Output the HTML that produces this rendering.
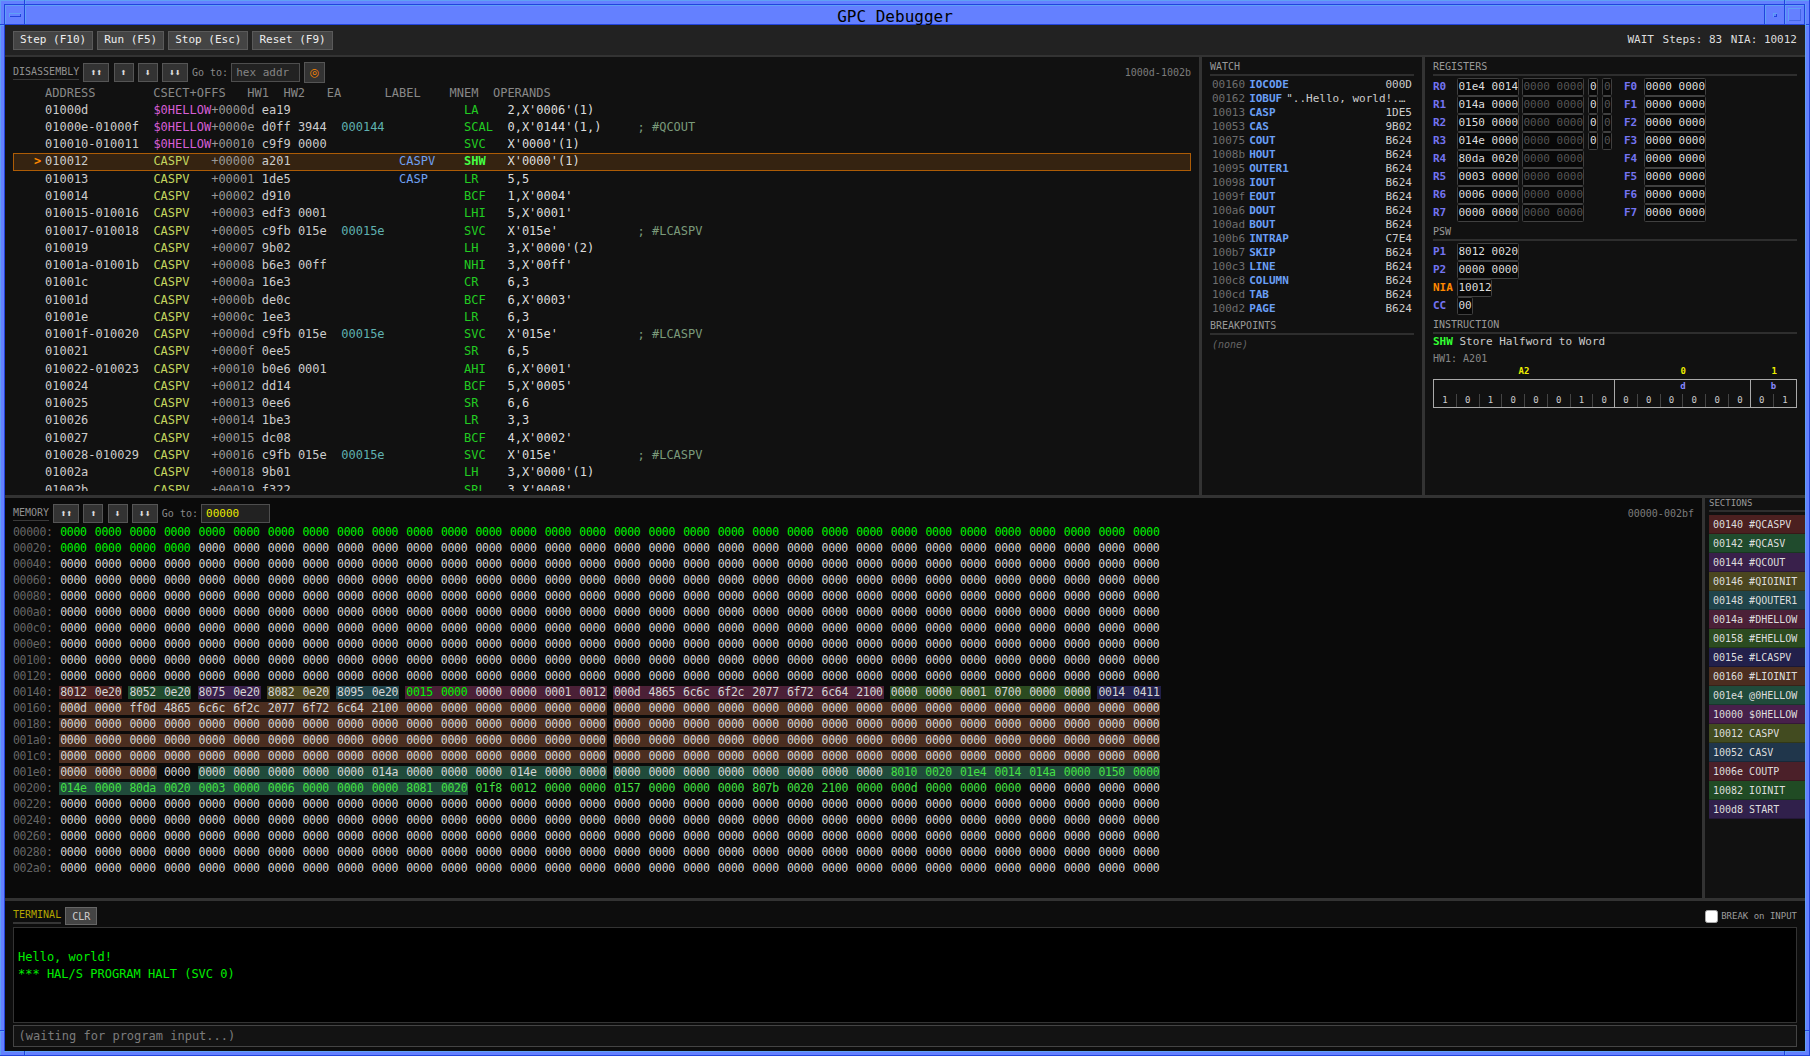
<!DOCTYPE html><html><head><meta charset="utf-8"><title>GPC Debugger</title><style>
*{box-sizing:border-box;margin:0;padding:0}
html,body{width:1810px;height:1056px;overflow:hidden;background:#6480ff}
body{font-family:"DejaVu Sans Mono","Liberation Mono",monospace;font-size:12px;color:#ccc;position:relative}
button{font-family:inherit}
/* window frame */
#frame{position:absolute;left:0;top:0;width:1810px;height:1056px;background:#6480ff}
#frame i{position:absolute;display:block}
.L{background:#5fa0f5}.D{background:#2244dd}
#title{position:absolute;left:25px;top:5px;width:1740px;height:20px;text-align:center;font-size:16px;line-height:20px;color:#000;padding-top:2px}
#app{position:absolute;left:5px;top:25px;width:1800px;height:1026px;background:#333;overflow:hidden}
#toolbar{position:absolute;left:0;top:0;width:1800px;height:30px;background:#222}
#toolbar button{position:relative;float:left;margin:6px 0 0 4px;height:19px;padding:0 6px 2px;font-size:11px;line-height:15px;background:#444;color:#eee;border:1px solid #5a5a5a}
#toolbar button:first-child{margin-left:8px}
#status{position:absolute;right:8px;top:8px;font-size:11px;line-height:14px;color:#ddd;white-space:pre}
#status span{margin-left:2px}
.panel{position:absolute;background:#111;overflow:hidden}
#disasm{left:0;top:32px;width:1194px;height:438px}
#watch{left:1197px;top:32px;width:220px;height:438px;padding:3px 8px}
#regs{left:1420px;top:32px;width:380px;height:438px;padding:3px 8px}
#mem{left:0;top:473px;width:1697px;height:400px;background:#0a0a0a}
#secs{left:1700px;top:473px;width:100px;height:400px;padding:0 0 0 4px}
#term{left:0;top:876px;width:1800px;height:150px;background:#0d0d0d}
/* section heading */
.sh{font-size:10px;line-height:13px;color:#999;border-bottom:2px solid #2e2e2e;height:16px;margin-bottom:2px}
/* panel head */
.phead{position:absolute;left:8px;top:5px;right:8px;height:21px;display:flex;align-items:center;gap:4.15px}
.ptitle{font-size:10px;line-height:13px;color:#909090;border-bottom:1px solid #3a3a3a;height:16px;padding-top:1px;margin-bottom:1px}
.nb{flex:none;height:19px;width:20px;background:#333;border:1px solid #555;color:#ddd;font-size:7px;line-height:14px;padding:0;text-align:center;font-family:"DejaVu Sans",sans-serif}
.nb2{width:26px}
.goto{font-size:10px;line-height:13px;color:#8a8a8a;margin-right:-1px}
.inp{flex:none;height:19px;background:#222;border:1px solid #4e4e4e;font-size:11px;line-height:16px;padding-left:4px;padding-top:1px;color:#ccc;width:68.5px}
.inp.ph{color:#858585}
.inp.yl{color:#e8e800}
.tgt{flex:none;height:21px;width:21.5px;background:#333;border:1px solid #555;color:#f80;font-size:11px;line-height:17px;padding:0;text-align:center;font-family:'DejaVu Sans',sans-serif}
.range{margin-left:auto;font-size:10px;line-height:13px;color:#7c7c7c}
/* disasm */
#dwrap{position:absolute;left:8px;right:8px;top:27.9px;bottom:4px;overflow:hidden}
.dhdr{white-space:pre;color:#888;font-size:12px;line-height:17.28px;height:16.8px;padding-left:32px}
.dr{height:17.28px;line-height:17.28px;white-space:pre;font-size:12px;position:relative;padding-left:32px}
.dr.cur{background:#352311;box-shadow:inset 0 0 0 1px #ad5c06}
.mk{position:absolute;left:21px;color:#f80;font-weight:bold}
.ad{color:#ccc}.cs10{color:#d65fd6}.cs11{color:#c3d65f}.of{color:#999}.hw{color:#ccc}.ea{color:#5fb0b0}.lb{color:#6fa0f0}.mn{color:#2c2}.op{color:#ddd}.cm{color:#7a9a7a}
.cur .mn{font-weight:bold;color:#4f4}
/* watch */
.wr{height:14px;line-height:14px;font-size:11px;white-space:nowrap;padding:0 2px;display:flex;overflow:hidden}
.wa{color:#6e6e6e;margin-right:4px}.wn{color:#6a9ff5;font-weight:bold}.wv{margin-left:auto;color:#ccc}
.ws{margin-left:4px;color:#ccc;overflow:hidden;text-overflow:ellipsis;flex:1}
.sh.bp{margin-top:3px}
.none{font-size:10px;line-height:14px;color:#666;font-style:italic;padding:1px 2px}
/* regs */
.rr{height:18px;position:relative;font-size:11px;line-height:16px}
.rl{position:absolute;left:0;top:0;font-weight:bold;color:#7474f2;line-height:17px}
.rl.nia{color:#f80}
.rl.fl{left:191px}
.rb{position:absolute;top:0;height:18px;border:1px solid #404040;background:#080808;color:#ddd;line-height:16px;padding-left:0.5px;white-space:pre;overflow:hidden;border-radius:1.5px}
.rb.dim{color:#555}
.b9{left:24px;width:62px}
.b9.dim{left:89px}
.b1{left:155px;width:10px;padding-left:1px}
.b1.dim{left:169px}
.b9.fb{left:211px}
.b5{left:24px;width:35px}
.b2{left:24px;width:15.5px}
.sh.psw,.sh.ins{margin-top:3px}
.idesc{font-size:11px;line-height:15px;height:15px;color:#ccc;margin-bottom:3px;margin-top:-2px}
.idesc b{color:#3f3}
.ihw{font-size:10px;line-height:13px;height:13px;color:#888}
.flabels{display:flex;font-size:9px;line-height:12px;font-weight:bold;color:#ee0;text-align:center;margin-top:0px}
.fbox{display:flex;height:29px;border:1px solid #aaa;margin-top:2px}
.fld{border-left:1px solid #aaa;position:relative;margin-left:-1px}
.fld:first-child{border-left:none;margin-left:0}
.fn{font-size:9px;line-height:12px;font-weight:bold;color:#88f;text-align:center;height:14px}
.bits{display:flex;font-size:9px;line-height:13px;color:#ccc;text-align:center;height:13px}
.bits span{flex:1;border-left:1px solid #444}
.bits span:first-child{border-left:none}
/* memory */
#mrows{position:absolute;left:8px;top:25.9px;font-size:11.5px;letter-spacing:-0.3025px;line-height:16px;word-spacing:1.5px;color:#d4d4d4}
.mr{height:16px;white-space:pre}
.ma{color:#666;margin-right:-0.7px}
.run{padding:0 1px;margin:0 -1px;font-size:11px}
.run b{font-weight:normal;font-size:11.5px}
.mr i{font-style:normal}
.g1{color:#00f400}.g2{color:#44e044}
/* sections */
#secs .sh{margin-bottom:3px;height:14px;font-size:9px;line-height:11px}
.si{height:19px;border-bottom:1px solid rgba(0,0,0,.25);font-size:10px;line-height:19px;padding-left:4px;color:#ddd;white-space:nowrap}
/* terminal */
.thead{position:absolute;left:8px;right:8px;top:6px;height:18px;display:flex;align-items:center;gap:4px}
.tt{color:#b4a400;border-bottom:2px solid #363636;height:17px;padding-top:1px;margin-bottom:0;margin-top:-1px}
.clr{height:18px;width:32px;background:#444;border:1px solid #666;color:#ccc;font-size:10px;line-height:14px;padding:1px 0 0 0}
.brk{margin-left:auto;font-size:9px;line-height:12px;color:#9c9c9c;display:flex;align-items:center}
.cb{display:inline-block;width:13px;height:13px;background:#fff;border-radius:2.5px;margin-right:3.5px;border:1px solid #aaa}
#tout{position:absolute;left:8px;right:8px;top:26px;height:96px;border:1px solid #333;background:#000;color:#0e0;font-size:12px;line-height:16.8px;white-space:pre;padding:4px 4px}
#tin{position:absolute;left:8px;right:8px;top:124px;height:22px;border:1px solid #444;background:#131313;color:#7c7c7c;font-size:12px;line-height:21px;padding-left:4.5px}

.s0{background:#4b2020}
.s1{background:#204b2d}
.s2{background:#39204b}
.s3{background:#4b4620}
.s4{background:#20444b}
.s5{background:#4b2037}
.s6{background:#2b4b20}
.s7{background:#22204b}
.s8{background:#4b2e20}
.s9{background:#204b3b}
.s10{background:#47204b}
.s11{background:#424b20}
.s12{background:#20364b}
.s13{background:#4b2029}
.s14{background:#204b24}
.s15{background:#30204b}
</style></head><body>
<div id="frame">
<i class="L" style="left:0;top:0;width:1810px;height:1px"></i>
<i class="L" style="left:0;top:0;width:1px;height:1056px"></i>
<i class="D" style="left:0;top:1055px;width:1810px;height:1px"></i>
<i class="D" style="left:1809px;top:0;width:1px;height:1056px"></i>
<i class="D" style="left:4px;top:4px;width:1801px;height:1px"></i>
<i class="D" style="left:4px;top:4px;width:1px;height:1048px"></i>
<i class="L" style="left:4px;top:1051px;width:1802px;height:1px"></i>
<i class="L" style="left:1805px;top:4px;width:1px;height:1048px"></i>
<i class="D" style="left:5px;top:24px;width:1800px;height:1px"></i>
<i class="L" style="left:5px;top:5px;width:1800px;height:1px"></i>
<i class="L" style="left:5px;top:5px;width:1px;height:19px"></i>
<i class="D" style="left:24px;top:5px;width:1px;height:20px"></i>
<i class="L" style="left:25px;top:5px;width:1px;height:19px"></i>
<i class="D" style="left:1764px;top:5px;width:1px;height:20px"></i>
<i class="L" style="left:1765px;top:5px;width:1px;height:19px"></i>
<i class="D" style="left:1784px;top:5px;width:1px;height:20px"></i>
<i class="L" style="left:1785px;top:5px;width:1px;height:19px"></i>
<i class="D" style="left:1804px;top:5px;width:1px;height:20px"></i>
<i class="D" style="left:24px;top:0;width:1px;height:4px"></i><i class="L" style="left:25px;top:1px;width:1px;height:3px"></i>
<i class="D" style="left:1784px;top:0;width:1px;height:4px"></i><i class="L" style="left:1785px;top:1px;width:1px;height:3px"></i>
<i class="D" style="left:0;top:24px;width:4px;height:1px"></i><i class="L" style="left:1px;top:25px;width:3px;height:1px"></i>
<i class="D" style="left:1806px;top:24px;width:4px;height:1px"></i><i class="L" style="left:1806px;top:25px;width:3px;height:1px"></i>
<i class="D" style="left:24px;top:1051px;width:1px;height:5px"></i><i class="L" style="left:25px;top:1052px;width:1px;height:3px"></i>
<i class="D" style="left:1784px;top:1051px;width:1px;height:5px"></i><i class="L" style="left:1785px;top:1052px;width:1px;height:3px"></i>
<i class="D" style="left:0;top:1030px;width:4px;height:1px"></i><i class="L" style="left:1px;top:1031px;width:3px;height:1px"></i>
<i class="D" style="left:1805px;top:1030px;width:5px;height:1px"></i><i class="L" style="left:1806px;top:1031px;width:3px;height:1px"></i>
<i class="L" style="left:9px;top:13px;width:12px;height:4px"></i><i class="D" style="left:10px;top:14px;width:11px;height:3px"></i><i style="left:10px;top:14px;width:10px;height:2px;background:#6480ff"></i>
<i class="L" style="left:1773px;top:13px;width:4px;height:4px"></i><i class="D" style="left:1774px;top:14px;width:3px;height:3px"></i><i style="left:1774px;top:14px;width:2px;height:2px;background:#6480ff"></i>
<i class="L" style="left:1788px;top:8px;width:13px;height:13px"></i><i style="left:1789px;top:9px;width:12px;height:12px;background:#4566e6"></i><i style="left:1789px;top:9px;width:11px;height:11px;background:#6480ff"></i>
<div id="title">GPC Debugger</div>
</div>

<div id="app">
<div id="toolbar"><button>Step (F10)</button><button>Run (F5)</button><button>Stop (Esc)</button><button>Reset (F9)</button><span id="status">WAIT <span>Steps: 83 </span><span>NIA: 10012</span></span></div>
<div id="disasm" class="panel">
<div class="phead"><span class="ptitle">DISASSEMBLY</span><button class="nb nb2">⬆⬆</button><button class="nb">⬆</button><button class="nb">⬇</button><button class="nb nb2">⬇⬇</button><span class="goto">Go to:</span><span class="inp ph">hex addr</span><button class="tgt">◎</button><span class="range">1000d-1002b</span></div>
<div id="dwrap"><div class="dhdr">ADDRESS        CSECT+OFFS   HW1  HW2   EA      LABEL    MNEM  OPERANDS</div>
<div class="dr"><span class="mk"></span><span class="ad">01000d         </span><span class="cs10">$0HELLOW</span><span class="of">+0000d</span> <span class="hw">ea19       </span><span class="ea">        </span><span class="lb">         </span><span class="mn">LA    </span><span class="op">2,X&#x27;0006&#x27;(1)      </span></div>
<div class="dr"><span class="mk"></span><span class="ad">01000e-01000f  </span><span class="cs10">$0HELLOW</span><span class="of">+0000e</span> <span class="hw">d0ff 3944  </span><span class="ea">000144  </span><span class="lb">         </span><span class="mn">SCAL  </span><span class="op">0,X&#x27;0144&#x27;(1,)     </span><span class="cm">; #QCOUT</span></div>
<div class="dr"><span class="mk"></span><span class="ad">010010-010011  </span><span class="cs10">$0HELLOW</span><span class="of">+00010</span> <span class="hw">c9f9 0000  </span><span class="ea">        </span><span class="lb">         </span><span class="mn">SVC   </span><span class="op">X&#x27;0000&#x27;(1)        </span></div>
<div class="dr cur"><span class="mk">&gt;</span><span class="ad">010012         </span><span class="cs11">CASPV   </span><span class="of">+00000</span> <span class="hw">a201       </span><span class="ea">        </span><span class="lb">CASPV    </span><span class="mn">SHW   </span><span class="op">X&#x27;0000&#x27;(1)        </span></div>
<div class="dr"><span class="mk"></span><span class="ad">010013         </span><span class="cs11">CASPV   </span><span class="of">+00001</span> <span class="hw">1de5       </span><span class="ea">        </span><span class="lb">CASP     </span><span class="mn">LR    </span><span class="op">5,5               </span></div>
<div class="dr"><span class="mk"></span><span class="ad">010014         </span><span class="cs11">CASPV   </span><span class="of">+00002</span> <span class="hw">d910       </span><span class="ea">        </span><span class="lb">         </span><span class="mn">BCF   </span><span class="op">1,X&#x27;0004&#x27;         </span></div>
<div class="dr"><span class="mk"></span><span class="ad">010015-010016  </span><span class="cs11">CASPV   </span><span class="of">+00003</span> <span class="hw">edf3 0001  </span><span class="ea">        </span><span class="lb">         </span><span class="mn">LHI   </span><span class="op">5,X&#x27;0001&#x27;         </span></div>
<div class="dr"><span class="mk"></span><span class="ad">010017-010018  </span><span class="cs11">CASPV   </span><span class="of">+00005</span> <span class="hw">c9fb 015e  </span><span class="ea">00015e  </span><span class="lb">         </span><span class="mn">SVC   </span><span class="op">X&#x27;015e&#x27;           </span><span class="cm">; #LCASPV</span></div>
<div class="dr"><span class="mk"></span><span class="ad">010019         </span><span class="cs11">CASPV   </span><span class="of">+00007</span> <span class="hw">9b02       </span><span class="ea">        </span><span class="lb">         </span><span class="mn">LH    </span><span class="op">3,X&#x27;0000&#x27;(2)      </span></div>
<div class="dr"><span class="mk"></span><span class="ad">01001a-01001b  </span><span class="cs11">CASPV   </span><span class="of">+00008</span> <span class="hw">b6e3 00ff  </span><span class="ea">        </span><span class="lb">         </span><span class="mn">NHI   </span><span class="op">3,X&#x27;00ff&#x27;         </span></div>
<div class="dr"><span class="mk"></span><span class="ad">01001c         </span><span class="cs11">CASPV   </span><span class="of">+0000a</span> <span class="hw">16e3       </span><span class="ea">        </span><span class="lb">         </span><span class="mn">CR    </span><span class="op">6,3               </span></div>
<div class="dr"><span class="mk"></span><span class="ad">01001d         </span><span class="cs11">CASPV   </span><span class="of">+0000b</span> <span class="hw">de0c       </span><span class="ea">        </span><span class="lb">         </span><span class="mn">BCF   </span><span class="op">6,X&#x27;0003&#x27;         </span></div>
<div class="dr"><span class="mk"></span><span class="ad">01001e         </span><span class="cs11">CASPV   </span><span class="of">+0000c</span> <span class="hw">1ee3       </span><span class="ea">        </span><span class="lb">         </span><span class="mn">LR    </span><span class="op">6,3               </span></div>
<div class="dr"><span class="mk"></span><span class="ad">01001f-010020  </span><span class="cs11">CASPV   </span><span class="of">+0000d</span> <span class="hw">c9fb 015e  </span><span class="ea">00015e  </span><span class="lb">         </span><span class="mn">SVC   </span><span class="op">X&#x27;015e&#x27;           </span><span class="cm">; #LCASPV</span></div>
<div class="dr"><span class="mk"></span><span class="ad">010021         </span><span class="cs11">CASPV   </span><span class="of">+0000f</span> <span class="hw">0ee5       </span><span class="ea">        </span><span class="lb">         </span><span class="mn">SR    </span><span class="op">6,5               </span></div>
<div class="dr"><span class="mk"></span><span class="ad">010022-010023  </span><span class="cs11">CASPV   </span><span class="of">+00010</span> <span class="hw">b0e6 0001  </span><span class="ea">        </span><span class="lb">         </span><span class="mn">AHI   </span><span class="op">6,X&#x27;0001&#x27;         </span></div>
<div class="dr"><span class="mk"></span><span class="ad">010024         </span><span class="cs11">CASPV   </span><span class="of">+00012</span> <span class="hw">dd14       </span><span class="ea">        </span><span class="lb">         </span><span class="mn">BCF   </span><span class="op">5,X&#x27;0005&#x27;         </span></div>
<div class="dr"><span class="mk"></span><span class="ad">010025         </span><span class="cs11">CASPV   </span><span class="of">+00013</span> <span class="hw">0ee6       </span><span class="ea">        </span><span class="lb">         </span><span class="mn">SR    </span><span class="op">6,6               </span></div>
<div class="dr"><span class="mk"></span><span class="ad">010026         </span><span class="cs11">CASPV   </span><span class="of">+00014</span> <span class="hw">1be3       </span><span class="ea">        </span><span class="lb">         </span><span class="mn">LR    </span><span class="op">3,3               </span></div>
<div class="dr"><span class="mk"></span><span class="ad">010027         </span><span class="cs11">CASPV   </span><span class="of">+00015</span> <span class="hw">dc08       </span><span class="ea">        </span><span class="lb">         </span><span class="mn">BCF   </span><span class="op">4,X&#x27;0002&#x27;         </span></div>
<div class="dr"><span class="mk"></span><span class="ad">010028-010029  </span><span class="cs11">CASPV   </span><span class="of">+00016</span> <span class="hw">c9fb 015e  </span><span class="ea">00015e  </span><span class="lb">         </span><span class="mn">SVC   </span><span class="op">X&#x27;015e&#x27;           </span><span class="cm">; #LCASPV</span></div>
<div class="dr"><span class="mk"></span><span class="ad">01002a         </span><span class="cs11">CASPV   </span><span class="of">+00018</span> <span class="hw">9b01       </span><span class="ea">        </span><span class="lb">         </span><span class="mn">LH    </span><span class="op">3,X&#x27;0000&#x27;(1)      </span></div>
<div class="dr"><span class="mk"></span><span class="ad">01002b         </span><span class="cs11">CASPV   </span><span class="of">+00019</span> <span class="hw">f322       </span><span class="ea">        </span><span class="lb">         </span><span class="mn">SRL   </span><span class="op">3,X&#x27;0008&#x27;         </span></div>
</div></div>
<div id="watch" class="panel">
<div class="sh">WATCH</div>
<div class="wr"><span class="wa">00160</span><span class="wn">IOCODE</span><span class="wv">000D</span></div>
<div class="wr"><span class="wa">00162</span><span class="wn">IOBUF</span><span class="ws">"..Hello, world!.…</span></div>
<div class="wr"><span class="wa">10013</span><span class="wn">CASP</span><span class="wv">1DE5</span></div>
<div class="wr"><span class="wa">10053</span><span class="wn">CAS</span><span class="wv">9B02</span></div>
<div class="wr"><span class="wa">10075</span><span class="wn">COUT</span><span class="wv">B624</span></div>
<div class="wr"><span class="wa">1008b</span><span class="wn">HOUT</span><span class="wv">B624</span></div>
<div class="wr"><span class="wa">10095</span><span class="wn">OUTER1</span><span class="wv">B624</span></div>
<div class="wr"><span class="wa">10098</span><span class="wn">IOUT</span><span class="wv">B624</span></div>
<div class="wr"><span class="wa">1009f</span><span class="wn">EOUT</span><span class="wv">B624</span></div>
<div class="wr"><span class="wa">100a6</span><span class="wn">DOUT</span><span class="wv">B624</span></div>
<div class="wr"><span class="wa">100ad</span><span class="wn">BOUT</span><span class="wv">B624</span></div>
<div class="wr"><span class="wa">100b6</span><span class="wn">INTRAP</span><span class="wv">C7E4</span></div>
<div class="wr"><span class="wa">100b7</span><span class="wn">SKIP</span><span class="wv">B624</span></div>
<div class="wr"><span class="wa">100c3</span><span class="wn">LINE</span><span class="wv">B624</span></div>
<div class="wr"><span class="wa">100c8</span><span class="wn">COLUMN</span><span class="wv">B624</span></div>
<div class="wr"><span class="wa">100cd</span><span class="wn">TAB</span><span class="wv">B624</span></div>
<div class="wr"><span class="wa">100d2</span><span class="wn">PAGE</span><span class="wv">B624</span></div>
<div class="sh bp">BREAKPOINTS</div><div class="none">(none)</div>
</div>
<div id="regs" class="panel">
<div class="sh">REGISTERS</div>
<div id="rgrid">
<div class="rr"><span class="rl">R0</span><span class="rb b9">01e4 0014</span><span class="rb b9 dim">0000 0000</span><span class="rb b1">0</span><span class="rb b1 dim">0</span><span class="rl fl">F0</span><span class="rb b9 fb">0000 0000</span></div>
<div class="rr"><span class="rl">R1</span><span class="rb b9">014a 0000</span><span class="rb b9 dim">0000 0000</span><span class="rb b1">0</span><span class="rb b1 dim">0</span><span class="rl fl">F1</span><span class="rb b9 fb">0000 0000</span></div>
<div class="rr"><span class="rl">R2</span><span class="rb b9">0150 0000</span><span class="rb b9 dim">0000 0000</span><span class="rb b1">0</span><span class="rb b1 dim">0</span><span class="rl fl">F2</span><span class="rb b9 fb">0000 0000</span></div>
<div class="rr"><span class="rl">R3</span><span class="rb b9">014e 0000</span><span class="rb b9 dim">0000 0000</span><span class="rb b1">0</span><span class="rb b1 dim">0</span><span class="rl fl">F3</span><span class="rb b9 fb">0000 0000</span></div>
<div class="rr"><span class="rl">R4</span><span class="rb b9">80da 0020</span><span class="rb b9 dim">0000 0000</span><span class="rl fl">F4</span><span class="rb b9 fb">0000 0000</span></div>
<div class="rr"><span class="rl">R5</span><span class="rb b9">0003 0000</span><span class="rb b9 dim">0000 0000</span><span class="rl fl">F5</span><span class="rb b9 fb">0000 0000</span></div>
<div class="rr"><span class="rl">R6</span><span class="rb b9">0006 0000</span><span class="rb b9 dim">0000 0000</span><span class="rl fl">F6</span><span class="rb b9 fb">0000 0000</span></div>
<div class="rr"><span class="rl">R7</span><span class="rb b9">0000 0000</span><span class="rb b9 dim">0000 0000</span><span class="rl fl">F7</span><span class="rb b9 fb">0000 0000</span></div>
</div>
<div class="sh psw">PSW</div>
<div class="rr"><span class="rl">P1</span><span class="rb b9">8012 0020</span></div>
<div class="rr"><span class="rl">P2</span><span class="rb b9">0000 0000</span></div>
<div class="rr"><span class="rl nia">NIA</span><span class="rb b5">10012</span></div>
<div class="rr"><span class="rl">CC</span><span class="rb b2">00</span></div>
<div class="sh ins">INSTRUCTION</div>
<div class="idesc"><b>SHW</b> Store Halfword to Word</div>
<div class="ihw">HW1: A201</div>
<div class="flabels"><span style="flex:8">A2</span><span style="flex:6">0</span><span style="flex:2">1</span></div>
<div class="fbox">
<div class="fld" style="flex:8"><div class="fn">&nbsp;</div><div class="bits"><span>1</span><span>0</span><span>1</span><span>0</span><span>0</span><span>0</span><span>1</span><span>0</span></div></div>
<div class="fld" style="flex:6"><div class="fn">d</div><div class="bits"><span>0</span><span>0</span><span>0</span><span>0</span><span>0</span><span>0</span></div></div>
<div class="fld" style="flex:2"><div class="fn">b</div><div class="bits"><span>0</span><span>1</span></div></div>
</div>
</div>
<div id="mem" class="panel">
<div class="phead"><span class="ptitle">MEMORY</span><button class="nb nb2">⬆⬆</button><button class="nb">⬆</button><button class="nb">⬇</button><button class="nb nb2">⬇⬇</button><span class="goto">Go to:</span><span class="inp yl">00000</span><span class="range">00000-002bf</span></div>
<div id="mrows">
<div class="mr"><span class="ma">00000:</span> <i class="g1">0000</i> <i class="g1">0000</i> <i class="g1">0000</i> <i class="g1">0000</i> <i class="g1">0000</i> <i class="g1">0000</i> <i class="g1">0000</i> <i class="g1">0000</i> <i class="g1">0000</i> <i class="g1">0000</i> <i class="g1">0000</i> <i class="g1">0000</i> <i class="g1">0000</i> <i class="g1">0000</i> <i class="g1">0000</i> <i class="g1">0000</i> <i class="g1">0000</i> <i class="g1">0000</i> <i class="g1">0000</i> <i class="g1">0000</i> <i class="g1">0000</i> <i class="g1">0000</i> <i class="g1">0000</i> <i class="g1">0000</i> <i class="g1">0000</i> <i class="g1">0000</i> <i class="g1">0000</i> <i class="g1">0000</i> <i class="g1">0000</i> <i class="g1">0000</i> <i class="g1">0000</i> <i class="g1">0000</i></div>
<div class="mr"><span class="ma">00020:</span> <i class="g1">0000</i> <i class="g1">0000</i> <i class="g1">0000</i> <i class="g1">0000</i> 0000 0000 0000 0000 0000 0000 0000 0000 0000 0000 0000 0000 0000 0000 0000 0000 0000 0000 0000 0000 0000 0000 0000 0000 0000 0000 0000 0000</div>
<div class="mr"><span class="ma">00040:</span> 0000 0000 0000 0000 0000 0000 0000 0000 0000 0000 0000 0000 0000 0000 0000 0000 0000 0000 0000 0000 0000 0000 0000 0000 0000 0000 0000 0000 0000 0000 0000 0000</div>
<div class="mr"><span class="ma">00060:</span> 0000 0000 0000 0000 0000 0000 0000 0000 0000 0000 0000 0000 0000 0000 0000 0000 0000 0000 0000 0000 0000 0000 0000 0000 0000 0000 0000 0000 0000 0000 0000 0000</div>
<div class="mr"><span class="ma">00080:</span> 0000 0000 0000 0000 0000 0000 0000 0000 0000 0000 0000 0000 0000 0000 0000 0000 0000 0000 0000 0000 0000 0000 0000 0000 0000 0000 0000 0000 0000 0000 0000 0000</div>
<div class="mr"><span class="ma">000a0:</span> 0000 0000 0000 0000 0000 0000 0000 0000 0000 0000 0000 0000 0000 0000 0000 0000 0000 0000 0000 0000 0000 0000 0000 0000 0000 0000 0000 0000 0000 0000 0000 0000</div>
<div class="mr"><span class="ma">000c0:</span> 0000 0000 0000 0000 0000 0000 0000 0000 0000 0000 0000 0000 0000 0000 0000 0000 0000 0000 0000 0000 0000 0000 0000 0000 0000 0000 0000 0000 0000 0000 0000 0000</div>
<div class="mr"><span class="ma">000e0:</span> 0000 0000 0000 0000 0000 0000 0000 0000 0000 0000 0000 0000 0000 0000 0000 0000 0000 0000 0000 0000 0000 0000 0000 0000 0000 0000 0000 0000 0000 0000 0000 0000</div>
<div class="mr"><span class="ma">00100:</span> 0000 0000 0000 0000 0000 0000 0000 0000 0000 0000 0000 0000 0000 0000 0000 0000 0000 0000 0000 0000 0000 0000 0000 0000 0000 0000 0000 0000 0000 0000 0000 0000</div>
<div class="mr"><span class="ma">00120:</span> 0000 0000 0000 0000 0000 0000 0000 0000 0000 0000 0000 0000 0000 0000 0000 0000 0000 0000 0000 0000 0000 0000 0000 0000 0000 0000 0000 0000 0000 0000 0000 0000</div>
<div class="mr"><span class="ma">00140:</span> <span class="run s0"><b>8012 0e20</b></span> <span class="run s1"><b>8052 0e20</b></span> <span class="run s2"><b>8075 0e20</b></span> <span class="run s3"><b>8082 0e20</b></span> <span class="run s4"><b>8095 0e20</b></span> <span class="run s5"><b><i class="g1">0015</i> <i class="g1">0000</i> 0000 0000 0001 0012</b></span> <span class="run s5"><b>000d 4865 6c6c 6f2c 2077 6f72 6c64 2100</b></span> <span class="run s6"><b>0000 0000 0001 0700 0000 0000</b></span> <span class="run s7"><b>0014 0411</b></span></div>
<div class="mr"><span class="ma">00160:</span> <span class="run s8"><b>000d 0000 ff0d 4865 6c6c 6f2c 2077 6f72 6c64 2100 0000 0000 0000 0000 0000 0000</b></span> <span class="run s8"><b>0000 0000 0000 0000 0000 0000 0000 0000 0000 0000 0000 0000 0000 0000 0000 0000</b></span></div>
<div class="mr"><span class="ma">00180:</span> <span class="run s8"><b>0000 0000 0000 0000 0000 0000 0000 0000 0000 0000 0000 0000 0000 0000 0000 0000</b></span> <span class="run s8"><b>0000 0000 0000 0000 0000 0000 0000 0000 0000 0000 0000 0000 0000 0000 0000 0000</b></span></div>
<div class="mr"><span class="ma">001a0:</span> <span class="run s8"><b>0000 0000 0000 0000 0000 0000 0000 0000 0000 0000 0000 0000 0000 0000 0000 0000</b></span> <span class="run s8"><b>0000 0000 0000 0000 0000 0000 0000 0000 0000 0000 0000 0000 0000 0000 0000 0000</b></span></div>
<div class="mr"><span class="ma">001c0:</span> <span class="run s8"><b>0000 0000 0000 0000 0000 0000 0000 0000 0000 0000 0000 0000 0000 0000 0000 0000</b></span> <span class="run s8"><b>0000 0000 0000 0000 0000 0000 0000 0000 0000 0000 0000 0000 0000 0000 0000 0000</b></span></div>
<div class="mr"><span class="ma">001e0:</span> <span class="run s8"><b>0000 0000 0000</b></span> 0000 <span class="run s9"><b>0000 0000 0000 0000 0000 014a 0000 0000 0000 014e 0000 0000</b></span> <span class="run s9"><b>0000 0000 0000 0000 0000 0000 0000 0000 <i class="g2">8010</i> <i class="g2">0020</i> <i class="g2">01e4</i> <i class="g2">0014</i> <i class="g2">014a</i> <i class="g2">0000</i> <i class="g2">0150</i> <i class="g2">0000</i></b></span></div>
<div class="mr"><span class="ma">00200:</span> <span class="run s9"><b><i class="g2">014e</i> <i class="g2">0000</i> <i class="g2">80da</i> <i class="g2">0020</i> <i class="g2">0003</i> <i class="g2">0000</i> <i class="g2">0006</i> <i class="g2">0000</i> <i class="g2">0000</i> <i class="g2">0000</i> <i class="g2">8081</i> <i class="g2">0020</i></b></span> <i class="g2">01f8</i> <i class="g2">0012</i> <i class="g2">0000</i> <i class="g2">0000</i> <i class="g2">0157</i> <i class="g2">0000</i> <i class="g2">0000</i> <i class="g2">0000</i> <i class="g2">807b</i> <i class="g2">0020</i> <i class="g2">2100</i> <i class="g2">0000</i> <i class="g2">000d</i> <i class="g2">0000</i> <i class="g2">0000</i> <i class="g2">0000</i> 0000 0000 0000 0000</div>
<div class="mr"><span class="ma">00220:</span> 0000 0000 0000 0000 0000 0000 0000 0000 0000 0000 0000 0000 0000 0000 0000 0000 0000 0000 0000 0000 0000 0000 0000 0000 0000 0000 0000 0000 0000 0000 0000 0000</div>
<div class="mr"><span class="ma">00240:</span> 0000 0000 0000 0000 0000 0000 0000 0000 0000 0000 0000 0000 0000 0000 0000 0000 0000 0000 0000 0000 0000 0000 0000 0000 0000 0000 0000 0000 0000 0000 0000 0000</div>
<div class="mr"><span class="ma">00260:</span> 0000 0000 0000 0000 0000 0000 0000 0000 0000 0000 0000 0000 0000 0000 0000 0000 0000 0000 0000 0000 0000 0000 0000 0000 0000 0000 0000 0000 0000 0000 0000 0000</div>
<div class="mr"><span class="ma">00280:</span> 0000 0000 0000 0000 0000 0000 0000 0000 0000 0000 0000 0000 0000 0000 0000 0000 0000 0000 0000 0000 0000 0000 0000 0000 0000 0000 0000 0000 0000 0000 0000 0000</div>
<div class="mr"><span class="ma">002a0:</span> 0000 0000 0000 0000 0000 0000 0000 0000 0000 0000 0000 0000 0000 0000 0000 0000 0000 0000 0000 0000 0000 0000 0000 0000 0000 0000 0000 0000 0000 0000 0000 0000</div>
</div></div>
<div id="secs" class="panel"><div class="sh">SECTIONS</div>
<div class="si s0">00140 #QCASPV</div>
<div class="si s1">00142 #QCASV</div>
<div class="si s2">00144 #QCOUT</div>
<div class="si s3">00146 #QIOINIT</div>
<div class="si s4">00148 #QOUTER1</div>
<div class="si s5">0014a #DHELLOW</div>
<div class="si s6">00158 #EHELLOW</div>
<div class="si s7">0015e #LCASPV</div>
<div class="si s8">00160 #LIOINIT</div>
<div class="si s9">001e4 @0HELLOW</div>
<div class="si s10">10000 $0HELLOW</div>
<div class="si s11">10012 CASPV</div>
<div class="si s12">10052 CASV</div>
<div class="si s13">1006e COUTP</div>
<div class="si s14">10082 IOINIT</div>
<div class="si s15">100d8 START</div>
</div>
<div id="term" class="panel">
<div class="thead"><span class="ptitle tt">TERMINAL</span><button class="clr">CLR</button><span class="brk"><span class="cb"></span>BREAK on INPUT</span></div>
<div id="tout">
Hello, world!
*** HAL/S PROGRAM HALT (SVC 0)</div>
<div id="tin">(waiting for program input...)</div>
</div>
</div></body></html>
